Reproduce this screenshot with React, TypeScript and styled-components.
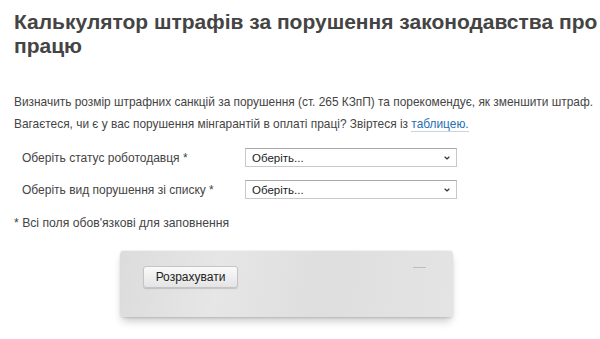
import React from 'react'
import styled, { createGlobalStyle } from 'styled-components'
import { ChevronDown } from 'lucide-react'

const GlobalStyle = createGlobalStyle`
  html, body {
    margin: 0;
    padding: 0;
    background: #fff;
  }
  body {
    font-family: "Liberation Sans", Arial, sans-serif;
    color: #333;
  }
`

const Page = styled.div`
  width: 600px;
  height: 339px;
  overflow: hidden;
  padding: 0 14px;
  box-sizing: border-box;
`

const Title = styled.h1`
  margin: 10px -12px 0 0;
  font-size: 21px;
  line-height: 24px;
  font-weight: bold;
  color: #444;
`

const Lead = styled.p`
  margin: 0 -14px 0 0;
  font-size: 11.9px;
  line-height: 22px;
  color: #444;
  white-space: nowrap;
  &:first-of-type {
    margin-top: 33px;
  }
`

const TableLink = styled.a`
  color: #2a6db0;
  text-decoration: none;
  border-bottom: 1px solid #c5d6ea;
`

const Form = styled.div`
  margin-top: 13px;
  display: grid;
  grid-template-columns: 223px 212px;
  row-gap: 13px;
  padding-left: 8px;
  align-items: center;
`

const Label = styled.label`
  font-size: 12px;
  color: #444;
`

const SelectBox = styled.div`
  position: relative;
  width: 212px;
  height: 19px;
  svg {
    position: absolute;
    right: 6px;
    top: 6px;
    pointer-events: none;
    color: #333;
  }
`

const Select = styled.select`
  appearance: none;
  display: block;
  height: 19px;
  width: 212px;
  box-sizing: border-box;
  font-family: "Liberation Sans", Arial, sans-serif;
  font-size: 11.5px;
  font-weight: normal;
  color: #222;
  border: 1px solid #c8c8c8;
  border-top-color: #a9a9a9;
  border-radius: 0;
  background: #fff;
  padding: 0 20px 0 6px;
  outline: none;
`

const Note = styled.p`
  margin: 17px 0 0;
  font-size: 12.2px;
  color: #444;
`

const Panel = styled.div`
  margin: 20px 0 0 106px;
  width: 333px;
  height: 67px;
  box-sizing: border-box;
  border-radius: 4px;
  background: linear-gradient(100deg, #dcdcdc 0%, #e6e6e6 30%, #dedede 60%, #e4e4e4 100%);
  box-shadow: 0 1px 0 #f2f2f2 inset, 0 6px 8px -2px rgba(0, 0, 0, 0.22), 0 1px 2px rgba(0, 0, 0, 0.12);
  padding: 16px 0 0 23px;
  position: relative;
`

const Mark = styled.span`
  position: absolute;
  top: 17px;
  right: 27px;
  width: 13px;
  height: 1px;
  background: #bdbdbd;
`

const CalcButton = styled.button`
  width: 95px;
  height: 22px;
  font-family: "Liberation Sans", Arial, sans-serif;
  font-size: 12px;
  color: #222;
  border: 1px solid #c4c4c4;
  border-radius: 3px;
  background: linear-gradient(#fafafa, #e4e4e4);
  box-shadow: 0 1px 1px rgba(0, 0, 0, 0.15);
  padding: 0;
`

const Dropdown = () => (
    <SelectBox>
        <Select defaultValue="">
            <option value="">Оберіть...</option>
        </Select>
        <ChevronDown size={8} strokeWidth={3.5} />
    </SelectBox>
)

const App = () => {
    return (
        <Page>
            <GlobalStyle />
            <Title>Калькулятор штрафів за порушення законодавства про працю</Title>
            <Lead>Визначить розмір штрафних санкцій за порушення (ст. 265 КЗпП) та порекомендує, як зменшити штраф.</Lead>
            <Lead>
                Вагаєтеся, чи є у вас порушення мінгарантій в оплаті праці? Звіртеся із <TableLink href="#">таблицею.</TableLink>
            </Lead>
            <Form>
                <Label>Оберіть статус роботодавця *</Label>
                <Dropdown />
                <Label>Оберіть вид порушення зі списку *</Label>
                <Dropdown />
            </Form>
            <Note>* Всі поля обов'язкові для заповнення</Note>
            <Panel>
                <CalcButton>Розрахувати</CalcButton>
                <Mark />
            </Panel>
        </Page>
    )
}

export default App
